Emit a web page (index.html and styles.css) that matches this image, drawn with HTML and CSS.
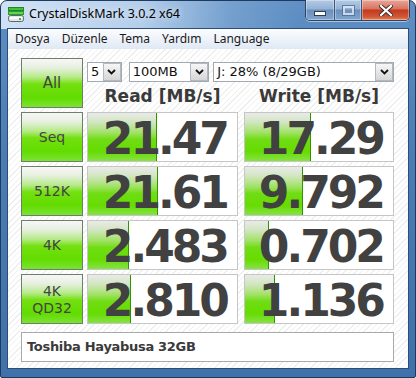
FILE: index.html
```html
<!DOCTYPE html>
<html lang="tr">
    <head>
        <meta charset="UTF-8" />
        <title>CrystalDiskMark 3.0.2 x64</title>
        <link rel="stylesheet" href="styles.css">
    </head>
    <body>
        <div class="window">
            <div class="titlebar">
                <svg class="app-icon" width="17" height="16" viewBox="0 0 17 16">
                    <rect x="0.5" y="0.5" width="15" height="3" fill="#3fc23a" stroke="#23862a" />
                    <rect x="0.5" y="4.5" width="15" height="3" fill="#5fd84f" stroke="#2c9a30" />
                    <rect x="0.5" y="8.5" width="15" height="6" rx="2" fill="#e4e6e8" stroke="#5d6670" />
                    <rect x="2" y="10" width="12" height="2" fill="#fafafa" />
                    <rect x="11" y="11" width="2" height="2" fill="#3ab83a" />
                </svg>
                <div class="title">CrystalDiskMark 3.0.2 x64</div>
                <div class="caption-buttons">
                    <div class="cap-btn cap-min"><span class="glyph-min"></span></div>
                    <div class="cap-btn cap-max"><span class="glyph-max"></span></div>
                    <div class="cap-btn cap-close">
                        <svg width="14" height="11" viewBox="0 0 14 11">
                            <path d="M2 1 L12 10 M12 1 L2 10" stroke="#3a2a2a" stroke-width="4" stroke-linecap="square" />
                            <path d="M2 1 L12 10 M12 1 L2 10" stroke="#fff" stroke-width="2.2" stroke-linecap="square" />
                        </svg>
                    </div>
                </div>
            </div>

            <div class="client-wrap">
                <div class="menubar">
                    <span class="menu-item">Dosya</span>
                    <span class="menu-item">Düzenle</span>
                    <span class="menu-item">Tema</span>
                    <span class="menu-item">Yardım</span>
                    <span class="menu-item">Language</span>
                </div>

                <div class="client">
                    <div class="grid">
                        <div class="btn btn-all">All</div>
                        <div class="top-controls">
                            <div class="combos">
                                <div class="combo combo-count"><span class="value">5</span><span class="arrow"><svg width="9" height="6" viewBox="0 0 9 6"><path d="M1 1 L4.5 4.5 L8 1" fill="none" stroke="#111" stroke-width="1.8" /></svg></span></div>
                                <div class="combo combo-size"><span class="value">100MB</span><span class="arrow"><svg width="9" height="6" viewBox="0 0 9 6"><path d="M1 1 L4.5 4.5 L8 1" fill="none" stroke="#111" stroke-width="1.8" /></svg></span></div>
                                <div class="combo combo-drive"><span class="value">J: 28% (8/29GB)</span><span class="arrow"><svg width="9" height="6" viewBox="0 0 9 6"><path d="M1 1 L4.5 4.5 L8 1" fill="none" stroke="#111" stroke-width="1.8" /></svg></span></div>
                            </div>
                            <div class="headers">
                                <div class="head head-read">Read [MB/s]</div>
                                <div class="head head-write">Write [MB/s]</div>
                            </div>
                        </div>

                        <div class="btn">Seq</div>
                        <div class="cell cell-read"><div class="bar" style="width: 69px"></div><span class="num">21.47</span></div>
                        <div class="cell cell-write"><div class="bar" style="width: 66px"></div><span class="num">17.29</span></div>

                        <div class="btn">512K</div>
                        <div class="cell cell-read"><div class="bar" style="width: 70px"></div><span class="num">21.61</span></div>
                        <div class="cell cell-write"><div class="bar" style="width: 58px"></div><span class="num">9.792</span></div>

                        <div class="btn">4K</div>
                        <div class="cell cell-read"><div class="bar" style="width: 41px"></div><span class="num">2.483</span></div>
                        <div class="cell cell-write"><div class="bar" style="width: 24px"></div><span class="num">0.702</span></div>

                        <div class="btn btn-two">4K<br>QD32</div>
                        <div class="cell cell-read"><div class="bar" style="width: 43px"></div><span class="num">2.810</span></div>
                        <div class="cell cell-write"><div class="bar" style="width: 30px"></div><span class="num">1.136</span></div>
                    </div>

                    <div class="name-box">Toshiba Hayabusa 32GB</div>
                </div>
            </div>
        </div>
    </body>
</html>
```

FILE: styles.css
```css
html,
body {
    margin: 0;
    width: 416px;
    height: 378px;
    overflow: hidden;
    background: #ffffff;
}

/* Window frame */
.window {
    box-sizing: border-box;
    width: 416px;
    height: 378px;
    border: 1px solid #1e3a5c;
    border-radius: 7px 7px 2px 2px;
    display: flex;
    flex-direction: column;
    background:
        linear-gradient(to right, rgba(214, 230, 247, 0.95) 0, rgba(196, 218, 242, 0.85) 140px, rgba(150, 186, 224, 0.4) 230px, rgba(120, 160, 205, 0) 300px) top / 100% 28px no-repeat,
        linear-gradient(to bottom, #5f8fc4 0, #4a7db6 40%, #3f72ab 100%);
}

.titlebar {
    height: 27px;
    display: flex;
    align-items: flex-start;
    flex-shrink: 0;
}

.app-icon {
    margin: 6px 0 0 7px;
}

.title {
    margin: 5px 0 0 4px;
    font-family: "Noto Sans", "DejaVu Sans", sans-serif;
    font-size: 12.5px;
    line-height: 16px;
    color: #000;
    text-shadow: 0 0 6px rgba(255, 255, 255, 0.9);
}

.caption-buttons {
    margin: -1px 5px 0 auto;
    display: flex;
    height: 20px;
    border: 1px solid #2c4460;
    border-top: none;
    border-radius: 0 0 5px 5px;
    overflow: hidden;
    box-shadow: 0 1px 0 rgba(255, 255, 255, 0.5);
}

.cap-btn {
    height: 20px;
    display: flex;
    align-items: center;
    justify-content: center;
    box-shadow: inset 0 0 0 1px rgba(255, 255, 255, 0.35);
}

.cap-min,
.cap-max {
    background: linear-gradient(to bottom, #b4cbe4 0, #93b2d6 45%, #6a8fbb 50%, #80a6d0 100%);
    border-right: 1px solid #3c5878;
}

.cap-min {
    width: 28px;
}

.cap-max {
    width: 26px;
}

.cap-close {
    width: 47px;
    background: linear-gradient(to bottom, #e7a698 0, #d8735f 45%, #c2381c 50%, #d2583a 85%, #e48a58 100%);
}

.glyph-min {
    display: block;
    width: 10px;
    height: 3px;
    margin-top: 6px;
    background: #fff;
    border: 1px solid #2e3e52;
}

.glyph-max {
    display: block;
    box-sizing: border-box;
    width: 11px;
    height: 9px;
    border: 2px solid #e8eef6;
    outline: 1px solid #51698a;
    opacity: 0.75;
}

/* Client area */
.client-wrap {
    flex: 1;
    margin: 0 6px 8px 6px;
    border: 1px solid #2d4d74;
    display: flex;
    flex-direction: column;
    background: #fff;
}

.menubar {
    height: 20px;
    display: flex;
    align-items: center;
    background: linear-gradient(to bottom, #fbfcfe 0, #eef3fa 50%, #dfe8f4 100%);
    font-family: "Noto Sans", "DejaVu Sans", sans-serif;
    font-size: 12px;
    color: #1a1a1a;
}

.menu-item {
    padding: 0 6px;
    line-height: 20px;
}

.menu-item:first-child {
    padding-left: 7px;
}

.client {
    flex: 1;
    padding: 9px 0 0 13px;
    background: repeating-linear-gradient(135deg, #ffffff 0, #ffffff 3px, #efefef 3px, #efefef 4px);
}

.grid {
    display: grid;
    grid-template-columns: 62px 153px 150px;
    grid-auto-rows: 50px;
    column-gap: 4px;
    row-gap: 4px;
}

/* Test buttons */
.btn {
    box-sizing: border-box;
    border: 1px solid #6d7f68;
    display: flex;
    align-items: center;
    justify-content: center;
    text-align: center;
    font-family: "DejaVu Sans", sans-serif;
    font-size: 14px;
    line-height: 17px;
    color: #444;
    background: linear-gradient(to bottom, #f7f7f7 0, #e7f0e0 18%, #b6ea88 38%, #74e010 52%, #62dc00 80%, #7ce236 100%);
}

.btn-all {
    font-size: 15px;
}

.btn-two {
    padding-top: 1px;
}

/* Top controls */
.top-controls {
    grid-column: 2 / span 2;
    display: flex;
    flex-direction: column;
}

.combos {
    margin-top: 4px;
    display: flex;
    height: 20px;
}

.combo {
    box-sizing: border-box;
    height: 20px;
    display: flex;
    border: 1px solid #a3a9b1;
    background: #fff;
    font-family: "DejaVu Sans", sans-serif;
    font-size: 13px;
    color: #111;
}

.combo .value {
    flex: 1;
    padding-left: 3px;
    line-height: 18px;
    white-space: nowrap;
}

.combo .arrow {
    box-sizing: border-box;
    width: 18px;
    height: 18px;
    border: 1px solid #b3b9c1;
    background: linear-gradient(to bottom, #f6f6f6 0, #e6e6e6 50%, #d6d6d6 100%);
    display: flex;
    align-items: center;
    justify-content: center;
}

.combo-count {
    width: 35px;
}

.combo-size {
    width: 81px;
    margin-left: 7px;
}

.combo-drive {
    width: 182px;
    margin-left: 4px;
}

.headers {
    display: grid;
    grid-template-columns: 151px 150px;
    column-gap: 6px;
    margin-top: 3px;
}

.head {
    text-align: center;
    font-family: "DejaVu Sans", sans-serif;
    font-weight: bold;
    font-size: 17px;
    line-height: 22px;
    color: #3a3a3a;
}

/* Result cells */
.cell {
    position: relative;
    box-sizing: border-box;
    height: 50px;
    border: 1px solid #c6c6c6;
    background: #fff;
    display: flex;
    justify-content: flex-end;
    align-items: center;
    padding: 3px 10px 0 0;
}

.cell-read {
    width: 151px;
}

.cell-write {
    width: 150px;
}

.bar {
    position: absolute;
    left: 0;
    top: 0;
    bottom: 0;
    box-sizing: border-box;
    border-right: 1px solid #2f9400;
    background: linear-gradient(to bottom, #e9ebe7 0, #d3e6c4 18%, #a4e26a 40%, #70dd14 55%, #66dc00 80%, #86e246 100%);
}

.num {
    position: relative;
    font-family: "DejaVu Sans", sans-serif;
    font-weight: bold;
    font-size: 44px;
    line-height: 43px;
    letter-spacing: -3px;
    color: #414141;
}

/* Drive name */
.name-box {
    box-sizing: border-box;
    width: 373px;
    height: 30px;
    margin-top: 8px;
    border: 1px solid #a9a9a9;
    background: #fff;
    padding-left: 5px;
    font-family: "DejaVu Sans", sans-serif;
    font-weight: bold;
    font-size: 13px;
    line-height: 28px;
    letter-spacing: -0.3px;
    color: #3a3a3a;
}
```
